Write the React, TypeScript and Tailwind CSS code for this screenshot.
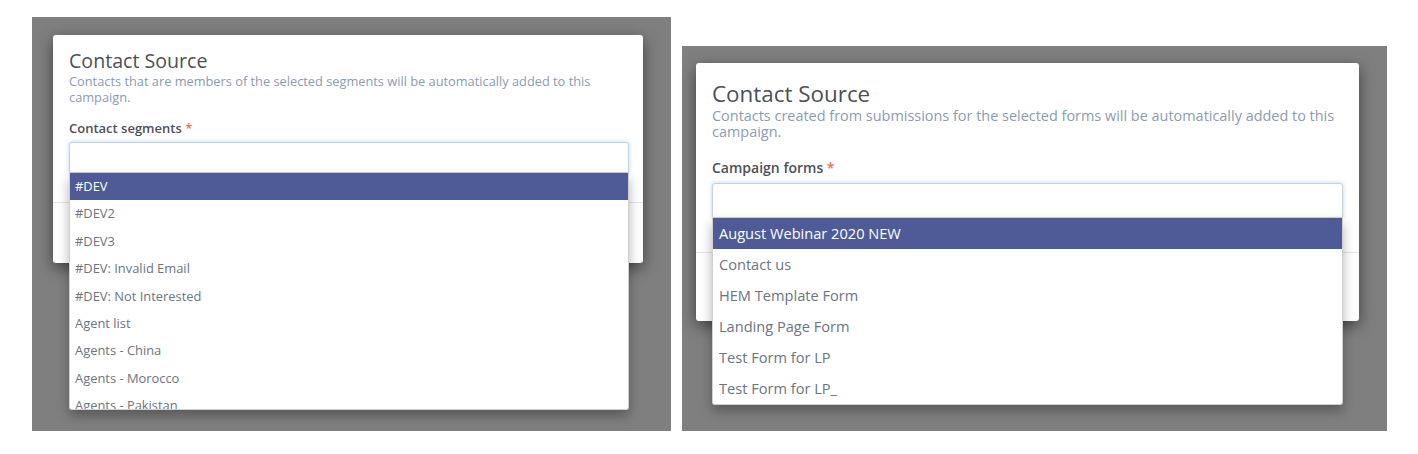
import React from "react";

const leftItems = [
  "#DEV",
  "#DEV2",
  "#DEV3",
  "#DEV: Invalid Email",
  "#DEV: Not Interested",
  "Agent list",
  "Agents - China",
  "Agents - Morocco",
  "Agents - Pakistan",
];

const rightItems = [
  "August Webinar 2020 NEW",
  "Contact us",
  "HEM Template Form",
  "Landing Page Form",
  "Test Form for LP",
  "Test Form for LP_",
];

export default function App() {
  return (
    <div className="w-[1418px] h-[454px] bg-white flex items-start pl-[32px] font-['Open_Sans',sans-serif]">
      {/* Left screenshot */}
      <div className="mt-[17px] w-[639px] h-[414px] bg-[#7f7f7f] pl-[21px] pt-[18px]">
        <div className="relative w-[590px] h-[228px] bg-white rounded-[3px] shadow-[0_5px_15px_rgba(0,0,0,0.5)] flex flex-col">
          <div className="h-[167px] pl-[16px] pr-[14px] pt-[14px]">
            <h2 className="text-[19.6px] leading-[24px] text-[#4b4f58]">Contact Source</h2>
            <p className="text-[12.8px] leading-[16px] text-[#8b9bb1]">
              Contacts that are members of the selected segments will be automatically added to this campaign.
            </p>
            <div className="mt-[14px] text-[13px] leading-[18px] font-semibold text-[#4b505a]">
              Contact segments <span className="text-[#f0704f]">*</span>
            </div>
            <div className="relative mt-[5px]">
              <div className="h-[31px] bg-white border border-[#c8d2dd] rounded-t-[3px] shadow-[0_0_4px_rgba(102,175,233,0.5)]" />
              <ul className="absolute left-0 top-full w-full h-[237px] overflow-hidden bg-white border-x border-b border-[#d0d0d0] rounded-b-[3px] shadow-[0_6px_12px_rgba(0,0,0,0.3)] z-10">
                {leftItems.map((item, i) => (
                  <li
                    key={item}
                    className={
                      i === 0
                        ? "h-[27.4px] flex items-center pl-[5px] text-[12.9px] bg-[#4e5b97] text-white"
                        : "h-[27.4px] flex items-center pl-[5px] text-[12.9px] text-[#6b7482]"
                    }
                  >
                    {item}
                  </li>
                ))}
              </ul>
            </div>
          </div>
          <div className="flex-1 border-t border-[#e5e5e5]" />
        </div>
      </div>

      {/* Right screenshot */}
      <div className="mt-[46px] ml-[11px] w-[705px] h-[385px] bg-[#7f7f7f] pl-[14px] pt-[17px]">
        <div className="relative w-[663px] h-[258px] bg-white rounded-[3px] shadow-[0_5px_15px_rgba(0,0,0,0.5)] flex flex-col">
          <div className="h-[189px] pl-[16px] pr-[16px] pt-[18px]">
            <h2 className="text-[22.4px] leading-[26px] text-[#4b4f58]">Contact Source</h2>
            <p className="mt-[1px] text-[14.45px] leading-[16px] text-[#8b9bb1]">
              Contacts created from submissions for the selected forms will be automatically added to this campaign.
            </p>
            <div className="mt-[18px] text-[14px] leading-[20px] font-semibold text-[#4b505a]">
              Campaign forms <span className="text-[#f0704f]">*</span>
            </div>
            <div className="relative mt-[5px]">
              <div className="h-[35px] bg-white border border-[#c8d2dd] rounded-t-[3px] shadow-[0_0_4px_rgba(102,175,233,0.5)]" />
              <ul className="absolute left-0 top-full w-full overflow-hidden bg-white border-x border-b border-[#d0d0d0] rounded-b-[3px] shadow-[0_6px_12px_rgba(0,0,0,0.3)] z-10">
                {rightItems.map((item, i) => (
                  <li
                    key={item}
                    className={
                      i === 0
                        ? "h-[31px] flex items-center pl-[6px] text-[14.6px] bg-[#4e5b97] text-white"
                        : "h-[31px] flex items-center pl-[6px] text-[14.6px] text-[#6b7482]"
                    }
                  >
                    {item}
                  </li>
                ))}
              </ul>
            </div>
          </div>
          <div className="flex-1 border-t border-[#e5e5e5]" />
        </div>
      </div>
    </div>
  );
}
